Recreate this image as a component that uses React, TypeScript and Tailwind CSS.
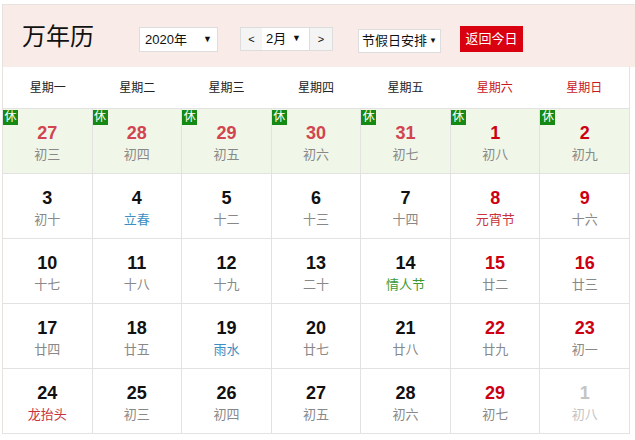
type Day = {
  n: number
  lunar: string
  numColor: string
  lunarColor?: string
  rest?: boolean
}

const RED = 'text-[#cc0011]'
const JAN = 'text-[#d2444f]'
const BLACK = 'text-[#111]'
const GRAY = 'text-[#c4c4c4]'

const weeks: Day[][] = [
  [
    { n: 27, lunar: '初三', numColor: JAN, rest: true },
    { n: 28, lunar: '初四', numColor: JAN, rest: true },
    { n: 29, lunar: '初五', numColor: JAN, rest: true },
    { n: 30, lunar: '初六', numColor: JAN, rest: true },
    { n: 31, lunar: '初七', numColor: JAN, rest: true },
    { n: 1, lunar: '初八', numColor: RED, rest: true },
    { n: 2, lunar: '初九', numColor: RED, rest: true },
  ],
  [
    { n: 3, lunar: '初十', numColor: BLACK },
    { n: 4, lunar: '立春', numColor: BLACK, lunarColor: 'text-[#3a8ec2]' },
    { n: 5, lunar: '十二', numColor: BLACK },
    { n: 6, lunar: '十三', numColor: BLACK },
    { n: 7, lunar: '十四', numColor: BLACK },
    { n: 8, lunar: '元宵节', numColor: RED, lunarColor: 'text-[#c8333e]' },
    { n: 9, lunar: '十六', numColor: RED },
  ],
  [
    { n: 10, lunar: '十七', numColor: BLACK },
    { n: 11, lunar: '十八', numColor: BLACK },
    { n: 12, lunar: '十九', numColor: BLACK },
    { n: 13, lunar: '二十', numColor: BLACK },
    { n: 14, lunar: '情人节', numColor: BLACK, lunarColor: 'text-[#3c9a32]' },
    { n: 15, lunar: '廿二', numColor: RED },
    { n: 16, lunar: '廿三', numColor: RED },
  ],
  [
    { n: 17, lunar: '廿四', numColor: BLACK },
    { n: 18, lunar: '廿五', numColor: BLACK },
    { n: 19, lunar: '雨水', numColor: BLACK, lunarColor: 'text-[#3a8ec2]' },
    { n: 20, lunar: '廿七', numColor: BLACK },
    { n: 21, lunar: '廿八', numColor: BLACK },
    { n: 22, lunar: '廿九', numColor: RED },
    { n: 23, lunar: '初一', numColor: RED },
  ],
  [
    { n: 24, lunar: '龙抬头', numColor: BLACK, lunarColor: 'text-[#c8333e]' },
    { n: 25, lunar: '初三', numColor: BLACK },
    { n: 26, lunar: '初四', numColor: BLACK },
    { n: 27, lunar: '初五', numColor: BLACK },
    { n: 28, lunar: '初六', numColor: BLACK },
    { n: 29, lunar: '初七', numColor: RED },
    { n: 1, lunar: '初八', numColor: GRAY, lunarColor: 'text-[#c4c4c4]' },
  ],
]

const weekdays = ['星期一', '星期二', '星期三', '星期四', '星期五', '星期六', '星期日']

function Cell({ day }: { day: Day }) {
  return (
    <div
      className={`relative h-[65px] border-r border-b border-[#e2e2e2] flex flex-col items-center pt-[14px] ${
        day.rest ? 'bg-[#f0f7e8]' : 'bg-white'
      }`}
    >
      {day.rest && (
        <span className="absolute top-[1px] left-0 w-[15px] h-[15px] bg-[#148a14] text-white text-[12px] leading-[15px] text-center">
          休
        </span>
      )}
      <span className={`text-[18px] leading-[20px] font-bold ${day.numColor}`}>{day.n}</span>
      <span className={`mt-[3px] text-[13px] leading-[18px] ${day.lunarColor ?? 'text-[#888]'}`}>
        {day.lunar}
      </span>
    </div>
  )
}

export default function App() {
  return (
    <div className="w-[635px] h-[440px] overflow-hidden bg-white font-['Liberation_Sans','Noto_Sans_CJK_SC',sans-serif]">
      <div className="ml-[2px] mt-[4px] w-[660px] border-t border-l border-[#e6e2e0]">
        {/* header */}
        <div className="h-[62px] bg-[#f9ece8] flex items-start">
          <h1 className="ml-[19px] mt-[14px] text-[24px] leading-[32px] text-[#111] font-['Noto_Sans_CJK_SC',sans-serif]">
            万年历
          </h1>
          <div className="ml-[45px] mt-[22px] w-[79px] h-[25px] bg-white border border-[#ddd] flex items-center justify-between px-[5px] text-[13px] text-[#111]">
            <span>2020年</span>
            <span className="text-[9px]">▼</span>
          </div>
          <div className="ml-[22px] mt-[22px] h-[24px] flex border border-[#ddd] text-[13px] text-[#111]">
            <span className="w-[21px] bg-[#f4f4f4] flex items-center justify-center text-[11px]">&lt;</span>
            <span className="w-[48px] bg-white border-r border-[#ddd] flex items-center justify-between pl-[4px] pr-[8px]">
              <span>2月</span>
              <span className="text-[9px]">▼</span>
            </span>
            <span className="w-[22px] bg-[#f4f4f4] flex items-center justify-center text-[11px]">&gt;</span>
          </div>
          <div className="ml-[25px] mt-[24px] w-[83px] h-[24px] bg-white border border-[#ddd] flex items-center gap-[2px] pl-[3px] text-[13px] text-[#111] whitespace-nowrap overflow-hidden">
            <span>节假日安排</span>
            <span className="text-[8px]">▼</span>
          </div>
          <button className="ml-[19px] mt-[21px] w-[63px] h-[26px] bg-[#d9000f] text-white text-[13px] flex items-center justify-center">
            返回今日
          </button>
        </div>

        {/* weekday row */}
        <div className="w-[627px] h-[42px] bg-white grid grid-cols-7 items-center border-r border-b border-[#e2e2e2] text-[12px]">
          {weekdays.map((w, i) => (
            <div key={w} className={`text-center ${i >= 5 ? 'text-[#c8161d]' : 'text-[#222]'}`}>
              {w}
            </div>
          ))}
        </div>

        {/* grid */}
        <div className="w-[627px] grid grid-cols-7">
          {weeks.flat().map((d, i) => (
            <Cell key={i} day={d} />
          ))}
        </div>
      </div>
    </div>
  )
}
